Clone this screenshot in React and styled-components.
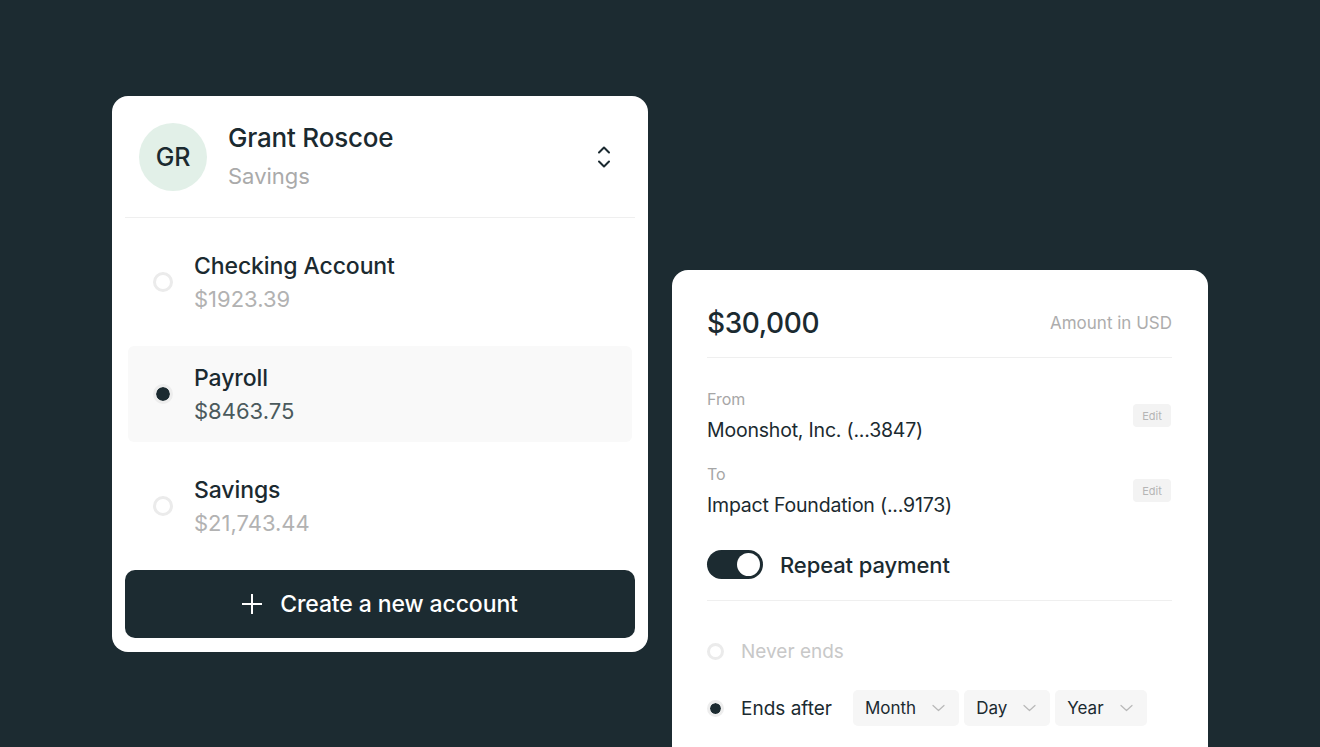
import React from 'react';
import styled, { createGlobalStyle } from 'styled-components';

const Global = createGlobalStyle`
  html, body {
    margin: 0;
    padding: 0;
    background: #1c2b31;
  }
  body {
    font-family: Inter, "Noto Sans", "Liberation Sans", sans-serif;
    color: #1b2a30;
    -webkit-font-smoothing: antialiased;
  }
`;

const Page = styled.div`
  height: 747px;
  overflow: hidden;
  box-sizing: border-box;
  padding: 96px 0 0 112px;
  display: flex;
  align-items: flex-start;
  gap: 24px;
`;

const Card = styled.div`
  width: 536px;
  box-sizing: border-box;
  background: #fff;
  border-radius: 16px;
`;

const AccountCard = styled(Card)`
  padding: 0 13px 14px;
`;

const Header = styled.div`
  display: flex;
  align-items: center;
  padding: 27px 24px 26px 14px;
  border-bottom: 1px solid #efefef;
`;

const Avatar = styled.div`
  width: 68px;
  height: 68px;
  border-radius: 50%;
  background: #e2f0e8;
  display: flex;
  align-items: center;
  justify-content: center;
  font-size: 25px;
  font-weight: 500;
  letter-spacing: -0.3px;
  flex-shrink: 0;
`;

const NameCol = styled.div`
  flex: 1;
  margin-left: 21px;
  display: flex;
  flex-direction: column;
  gap: 8px;
  margin-top: -3px;
`;

const Name = styled.div`
  font-size: 26px;
  line-height: 32px;
  font-weight: 500;
  letter-spacing: -0.2px;
`;

const Sub = styled.div`
  font-size: 22px;
  line-height: 28px;
  color: #aaaaaa;
`;

const Rows = styled.div`
  margin: 16px 3px 0;
  display: flex;
  flex-direction: column;
  gap: 16px;
`;

const Row = styled.div`
  height: 96px;
  display: flex;
  align-items: center;
  gap: 21px;
  padding-left: 25px;
  border-radius: 6px;
  background: ${({ selected }) => (selected ? '#f9f9f9' : 'transparent')};
`;

const Radio = styled.span`
  box-sizing: border-box;
  width: ${({ size }) => size}px;
  height: ${({ size }) => size}px;
  border-radius: 50%;
  flex-shrink: 0;
  border: 3px solid ${({ checked }) => (checked ? '#ededed' : '#ebebeb')};
  background: ${({ checked }) => (checked ? '#1b2a30' : '#fff')};
  background-clip: padding-box;
`;

const RowText = styled.div`
  display: flex;
  flex-direction: column;
  gap: 3px;
`;

const RowTitle = styled.div`
  font-size: 23px;
  line-height: 30px;
  font-weight: 500;
  letter-spacing: -0.1px;
`;

const RowAmount = styled.div`
  font-size: 22px;
  line-height: 30px;
  color: ${({ selected }) => (selected ? '#4b5a5d' : '#b2b2b2')};
`;

const CreateButton = styled.button`
  margin-top: 16px;
  width: 100%;
  height: 68px;
  border: none;
  border-radius: 10px;
  background: #1c2b31;
  color: #fff;
  font-family: inherit;
  font-size: 23px;
  font-weight: 500;
  letter-spacing: -0.1px;
  display: flex;
  align-items: center;
  justify-content: center;
  gap: 18px;
  cursor: pointer;
`;

const TransferCard = styled(Card)`
  margin-top: 174px;
  padding: 35px 36px 40px 35px;
  min-height: 520px;
`;

const AmountRow = styled.div`
  display: flex;
  align-items: center;
  justify-content: space-between;
  padding-bottom: 16px;
  border-bottom: 1px solid #efefef;
`;

const Amount = styled.div`
  font-size: 28px;
  line-height: 36px;
  font-weight: 500;
  letter-spacing: -0.4px;
`;

const Hint = styled.div`
  font-size: 17px;
  color: #adadad;
`;

const Party = styled.div`
  display: flex;
  align-items: center;
  justify-content: space-between;
  margin-top: ${({ first }) => (first ? 29 : 18)}px;
`;

const Label = styled.div`
  font-size: 16px;
  line-height: 24px;
  color: #a6a6a6;
`;

const Value = styled.div`
  margin-top: 5px;
  font-size: 19.5px;
  line-height: 28px;
  letter-spacing: -0.2px;
`;

const EditButton = styled.button`
  width: 38px;
  height: 23px;
  border: none;
  border-radius: 4px;
  background: #f3f3f3;
  color: #b5b5b5;
  font-family: inherit;
  font-size: 11px;
  padding: 0;
  margin-right: 1px;
`;

const ToggleRow = styled.div`
  display: flex;
  align-items: center;
  gap: 17px;
  margin-top: 31px;
  padding-bottom: 21px;
  border-bottom: 1px solid #efefef;
`;

const Toggle = styled.span`
  position: relative;
  width: 56px;
  height: 29px;
  border-radius: 15px;
  background: #1c2b31;
  flex-shrink: 0;

  &::after {
    content: '';
    position: absolute;
    top: 3px;
    right: 3px;
    width: 23px;
    height: 23px;
    border-radius: 50%;
    background: #fff;
  }
`;

const ToggleLabel = styled.div`
  font-size: 22px;
  font-weight: 500;
  letter-spacing: -0.1px;
`;

const Option = styled.div`
  display: flex;
  align-items: center;
  gap: 17px;
  height: 36px;
  margin-top: ${({ first }) => (first ? 32 : 21)}px;
`;

const OptionText = styled.div`
  font-size: 19px;
  color: ${({ muted }) => (muted ? '#c8c8c8' : '#1b2a30')};
  margin-right: 4px;
`;

const Selects = styled.div`
  display: flex;
  gap: 5px;
`;

const Select = styled.div`
  height: 36px;
  display: flex;
  align-items: center;
  gap: 16px;
  padding: 0 14px 0 12px;
  border-radius: 5px;
  background: #f6f6f6;
  font-size: 17px;
`;

const UpDownIcon = () => (
  <svg width="14" height="26" viewBox="0 0 14 26" fill="none" stroke="#1b2a30" strokeWidth="2" strokeLinecap="round" strokeLinejoin="round">
    <path d="M2 8.5 7 3.5 12 8.5" />
    <path d="M2 17.5 7 22.5 12 17.5" />
  </svg>
);

const PlusIcon = () => (
  <svg width="20" height="20" viewBox="0 0 20 20" fill="none" stroke="#fff" strokeWidth="2" strokeLinecap="round">
    <path d="M10 0.5v19M0.5 10h19" />
  </svg>
);

const ChevronDown = () => (
  <svg width="13" height="8" viewBox="0 0 13 8" fill="none" stroke="#b8b8b8" strokeWidth="1.2" strokeLinecap="round" strokeLinejoin="round">
    <path d="M1 1.5 6.5 6.5 12 1.5" />
  </svg>
);

const accounts = [
  { name: 'Checking Account', amount: '$1923.39' },
  { name: 'Payroll', amount: '$8463.75', selected: true },
  { name: 'Savings', amount: '$21,743.44' },
];

export default function App() {
  return (
    <>
      <Global />
      <Page>
        <AccountCard>
          <Header>
            <Avatar>GR</Avatar>
            <NameCol>
              <Name>Grant Roscoe</Name>
              <Sub>Savings</Sub>
            </NameCol>
            <UpDownIcon />
          </Header>
          <Rows>
            {accounts.map((a) => (
              <Row key={a.name} selected={a.selected}>
                <Radio size={20} checked={a.selected} />
                <RowText>
                  <RowTitle>{a.name}</RowTitle>
                  <RowAmount selected={a.selected}>{a.amount}</RowAmount>
                </RowText>
              </Row>
            ))}
          </Rows>
          <CreateButton>
            <PlusIcon />
            Create a new account
          </CreateButton>
        </AccountCard>

        <TransferCard>
          <AmountRow>
            <Amount>$30,000</Amount>
            <Hint>Amount in USD</Hint>
          </AmountRow>
          <Party first>
            <div>
              <Label>From</Label>
              <Value>Moonshot, Inc. (...3847)</Value>
            </div>
            <EditButton>Edit</EditButton>
          </Party>
          <Party>
            <div>
              <Label>To</Label>
              <Value>Impact Foundation (...9173)</Value>
            </div>
            <EditButton>Edit</EditButton>
          </Party>
          <ToggleRow>
            <Toggle />
            <ToggleLabel>Repeat payment</ToggleLabel>
          </ToggleRow>
          <Option first>
            <Radio size={17} />
            <OptionText muted>Never ends</OptionText>
          </Option>
          <Option>
            <Radio size={17} checked />
            <OptionText>Ends after</OptionText>
            <Selects>
              {['Month', 'Day', 'Year'].map((s) => (
                <Select key={s}>
                  {s}
                  <ChevronDown />
                </Select>
              ))}
            </Selects>
          </Option>
        </TransferCard>
      </Page>
    </>
  );
}
